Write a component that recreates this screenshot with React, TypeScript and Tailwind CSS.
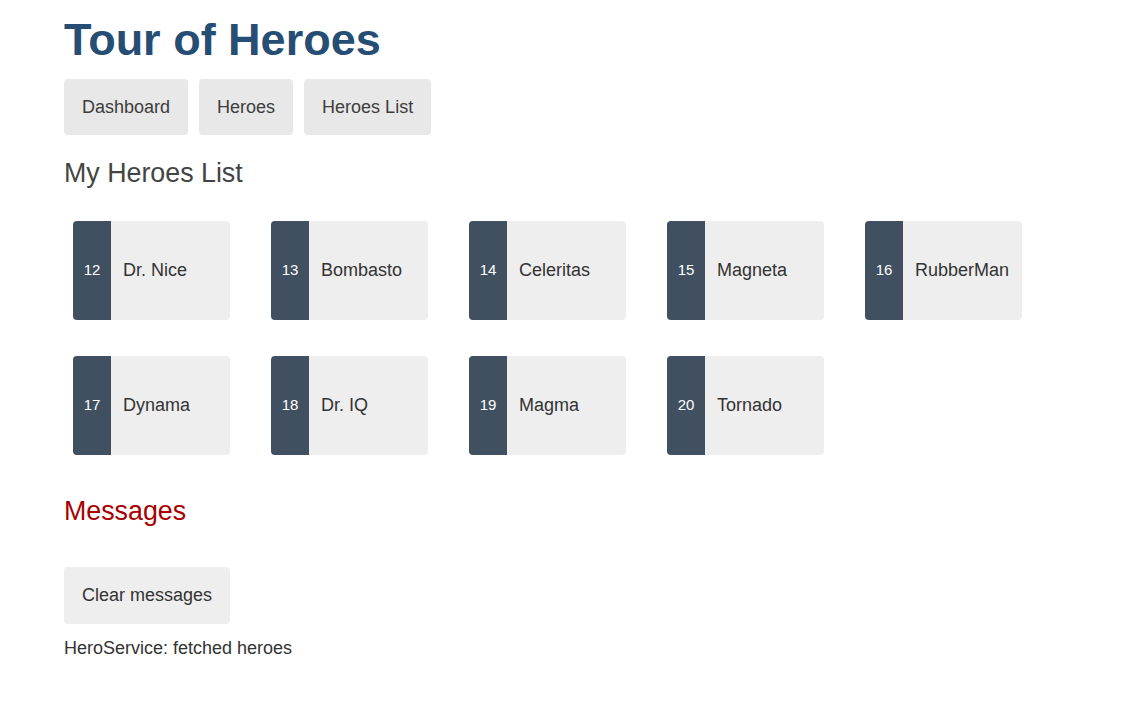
const heroes = [
  { id: 12, name: "Dr. Nice" },
  { id: 13, name: "Bombasto" },
  { id: 14, name: "Celeritas" },
  { id: 15, name: "Magneta" },
  { id: 16, name: "RubberMan" },
  { id: 17, name: "Dynama" },
  { id: 18, name: "Dr. IQ" },
  { id: 19, name: "Magma" },
  { id: 20, name: "Tornado" },
];

const navLinks = ["Dashboard", "Heroes", "Heroes List"];

export default function App() {
  return (
    <div className="min-h-screen bg-white pl-[64px] pt-[15px] font-['Liberation_Sans',Arial,sans-serif] text-[#333]">
      <h1 className="text-[45px] leading-[50px] font-bold text-[#264d73]">Tour of Heroes</h1>

      <nav className="mt-[14px] flex gap-[11px]">
        {navLinks.map((label) => (
          <a
            key={label}
            href="#"
            className="block rounded-[4px] bg-[#e8e8e8] px-[18px] py-[18px] text-[18px] leading-[20px] text-[#3d3d3d]"
          >
            {label}
          </a>
        ))}
      </nav>

      <h2 className="mt-[23px] text-[26.8px] leading-[30px] text-[#444]">My Heroes List</h2>

      <ul className="mt-[33px] grid w-[1000px] grid-cols-[repeat(5,157px)] gap-x-[41px] gap-y-[36px] pl-[9px]">
        {heroes.map((hero) => (
          <li key={hero.id} className="flex h-[99px] items-center rounded-[4px] bg-[#eee]">
            <span className="flex h-full w-[38px] items-center justify-center rounded-l-[4px] bg-[#405061] text-[15px] text-white">
              {hero.id}
            </span>
            <span className="pl-[12px] text-[18px] text-[#333]">{hero.name}</span>
          </li>
        ))}
      </ul>

      <h2 className="mt-[41px] text-[26.8px] leading-[30px] text-[#a80000]">Messages</h2>

      <button className="mt-[41px] block h-[57px] rounded-[4px] bg-[#eee] px-[18px] text-[18px] text-[#333]">
        Clear messages
      </button>

      <div className="mt-[14px] text-[18px] leading-[20px] text-[#333]">HeroService: fetched heroes</div>
    </div>
  );
}
